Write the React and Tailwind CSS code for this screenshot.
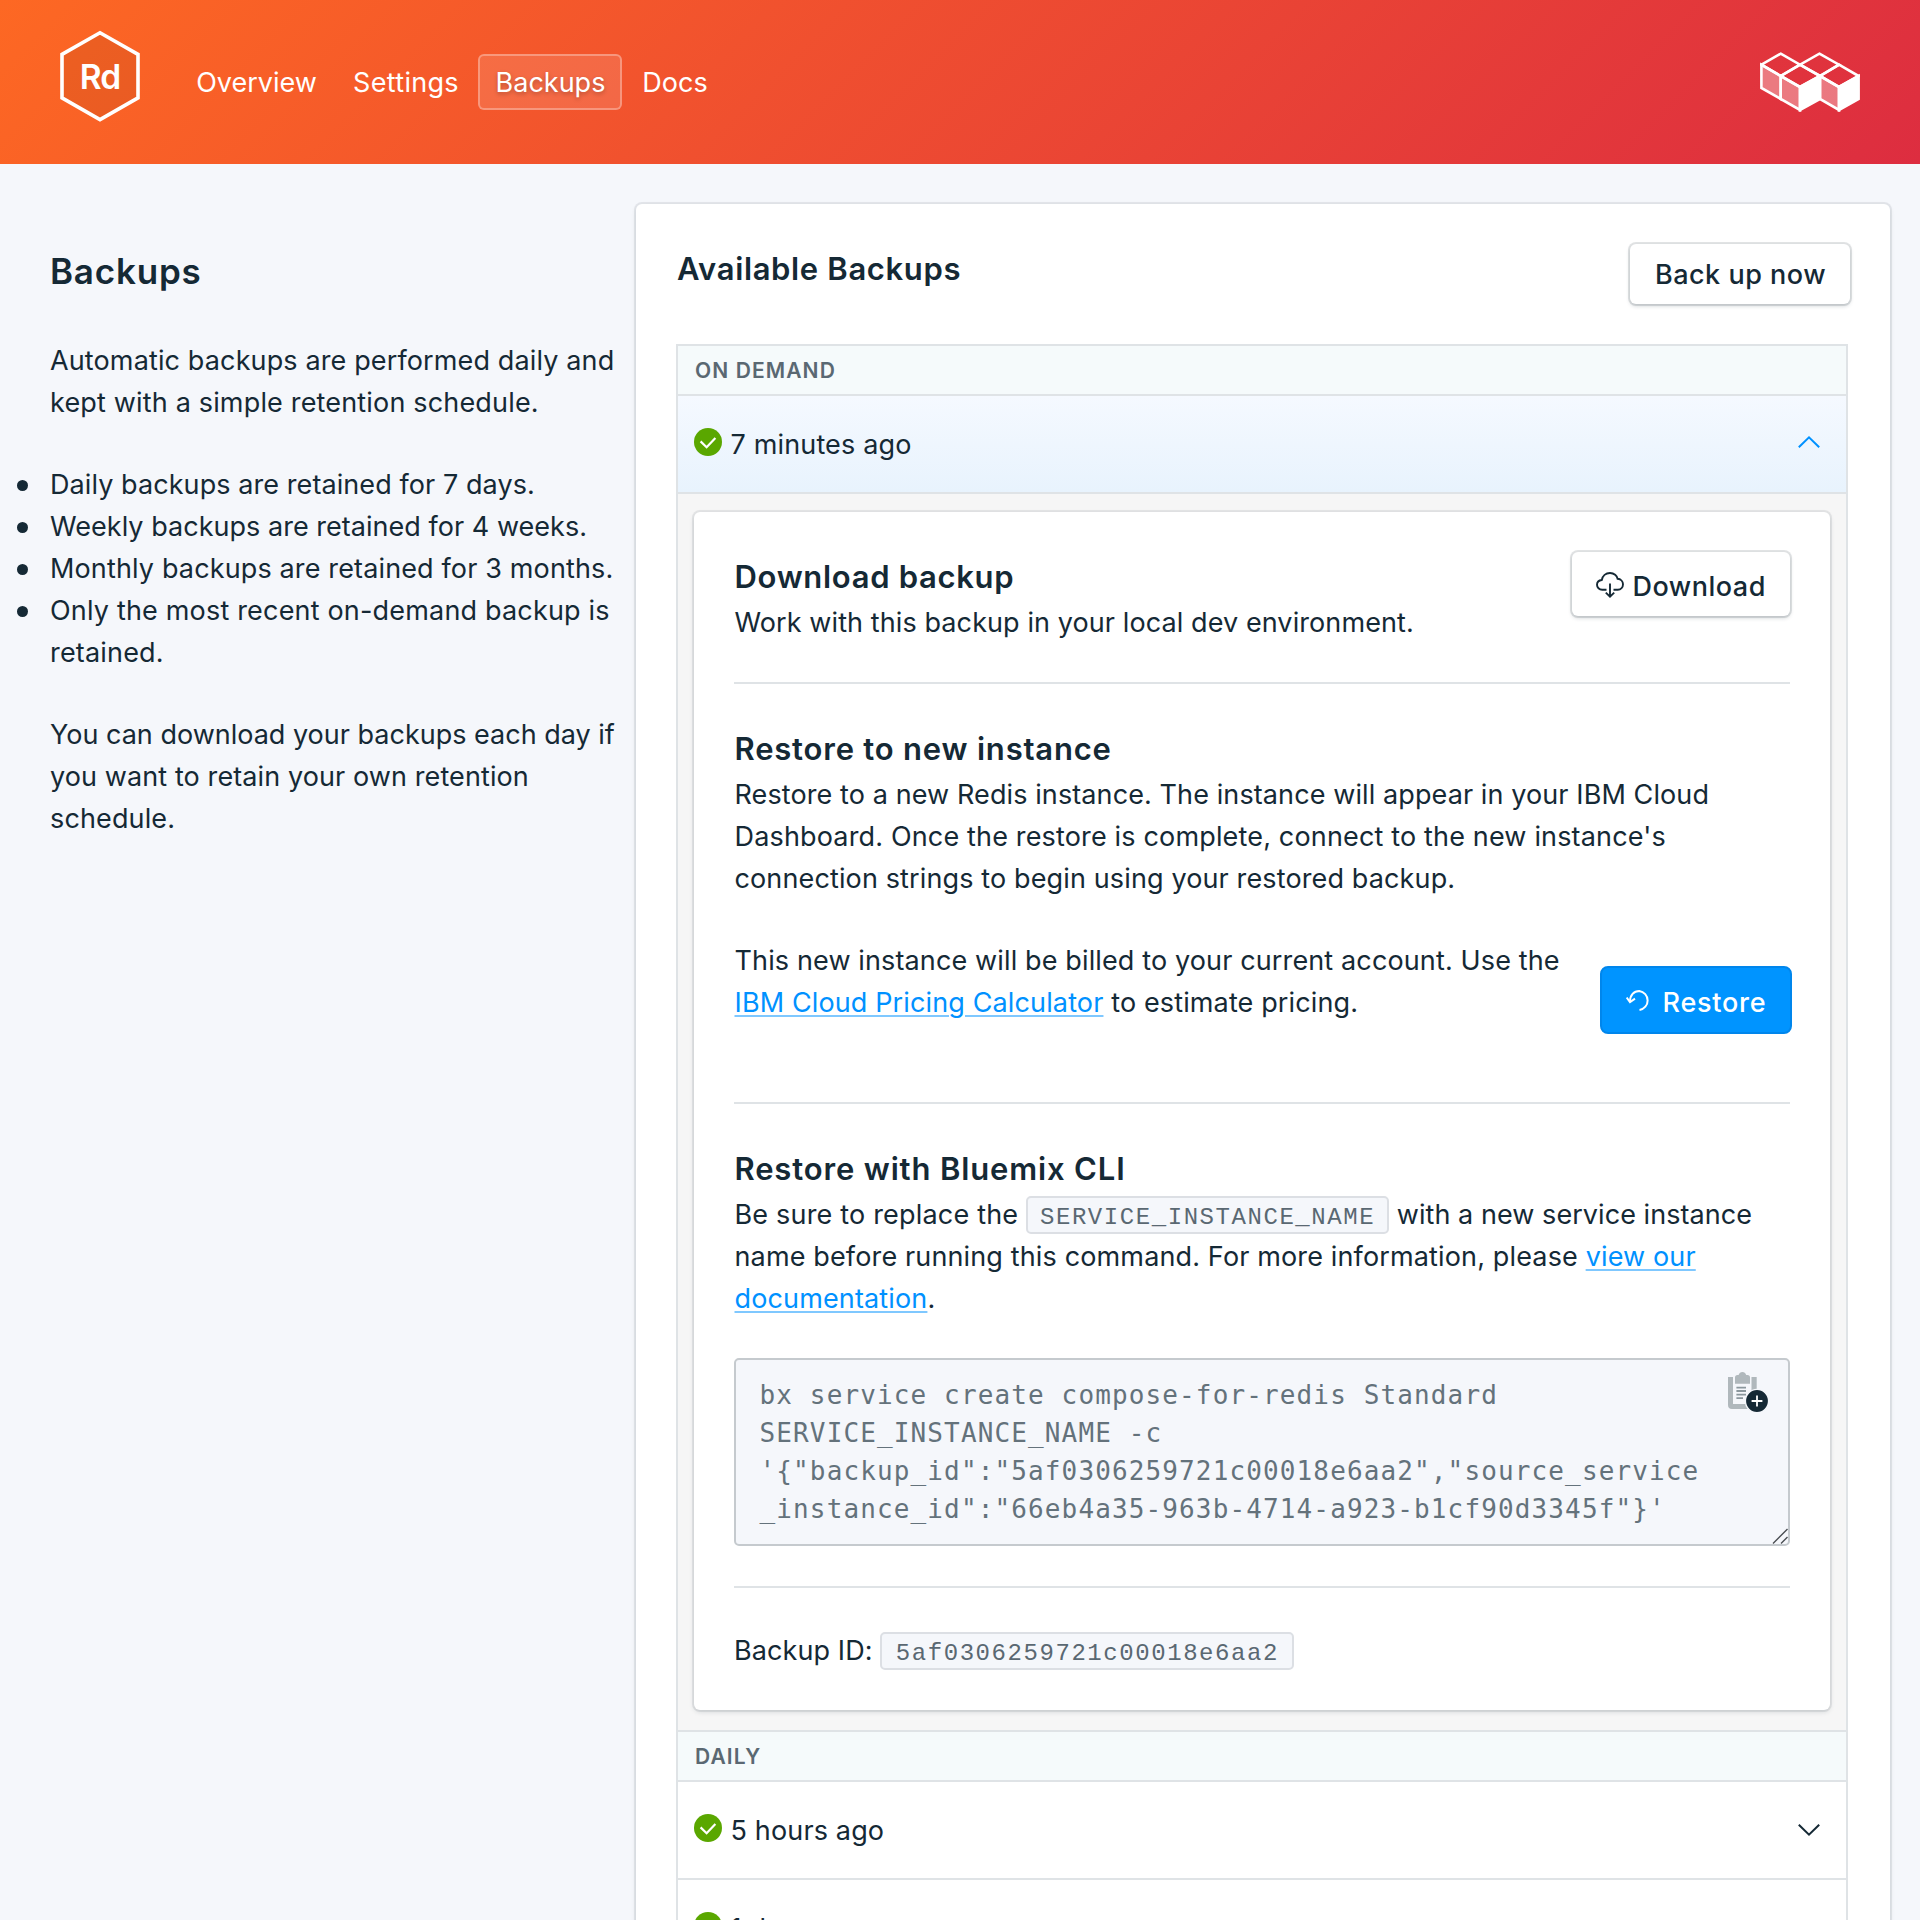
import React from "react";

function HexLogo() {
  return (
    <div className="grid h-[92px] w-[80px] shrink-0 place-items-center">
      <svg viewBox="0 0 80 92" className="col-start-1 row-start-1 h-[92px] w-[80px]">
        <polygon
          points="40,2.8 78,24.4 78,67.9 40,89.6 2,67.9 2,24.4"
          fill="#000"
          fillOpacity="0.06"
          stroke="#fff"
          strokeWidth="3.6"
        />
      </svg>
      <span className="col-start-1 row-start-1 pt-[2px] text-[33.5px] leading-[40px] font-semibold tracking-[-0.8px] text-white">
        Rd
      </span>
    </div>
  );
}

function CubesLogo() {
  return (
    <svg viewBox="0 0 100 60" className="h-[60px] w-[100px]" stroke="#fff" strokeWidth="2.6" strokeLinejoin="miter">
      <g fill="#fff" fillOpacity="0.35">
        <polygon points="1.4,12.7 20.7,24 20.7,47 1.4,36" />
        <polygon points="20.7,24 40,35 40,58 20.7,47" />
        <polygon points="60,24 79,35 79,58 60,47" />
      </g>
      <g fill="#fff">
        <polygon points="40,35 60,24 60,47 40,58" />
        <polygon points="79,35 98.6,24 98.6,47 79,58" />
      </g>
      <g fill="none">
        <polygon points="20.7,1.7 40,12.7 20.7,24 1.4,12.7" />
        <polygon points="59.4,1.7 79,12.7 60,24 40,12.7" />
        <polygon points="40,12.7 60,24 40,35 20.7,24" />
        <polygon points="79,12.7 98.6,24 79,35 60,24" />
      </g>
    </svg>
  );
}

function CloudDownload() {
  return (
    <svg viewBox="0 0 28 26" className="mb-[4px] h-[26px] w-[28px] shrink-0" fill="none" stroke="#152935" strokeWidth="1.9">
      <path d="M10.5 17.7H6.2C3.2 17.7 1 15.5 1 12.7C1 10.3 3 8.3 5.8 8C6.5 4 9.8 1 14 1C18.2 1 21 4 21.6 6.8C24.8 7 27 9.5 27 12.3C27 15.3 24.8 17.7 21.8 17.7H17.5" />
      <path d="M14 11.5V24.5M9.8 20.6L14 24.6L18.2 20.6" />
    </svg>
  );
}

function RestoreIcon() {
  return (
    <svg viewBox="0 0 24 21" className="mb-[5px] h-[21px] w-[24px] shrink-0" fill="none" stroke="#fff" strokeWidth="2">
      <path d="M4 12C3.8 5 8 1 13.3 1A9.6 9.6 0 0 1 13.5 20" />
      <path d="M0.7 7.5L4 12.2L9 8.6" />
    </svg>
  );
}

function CheckBadge() {
  return (
    <svg viewBox="0 0 28 28" className="mb-[4px] h-[28px] w-[28px] shrink-0">
      <circle cx="14" cy="14" r="14" fill="#5aa700" />
      <path d="M6.6 13.4L12.6 19.2L21.4 10" fill="none" stroke="#fff" strokeWidth="2.2" />
    </svg>
  );
}

function Chevron({ up }) {
  return up ? (
    <svg viewBox="0 0 22 12" className="mr-[26px] mb-[4px] h-[12px] w-[22px]" fill="none" stroke="#0091ff" strokeWidth="2">
      <path d="M0.8 11.3L11 1.4L21.2 11.3" />
    </svg>
  ) : (
    <svg viewBox="0 0 22 12" className="mr-[26px] mb-[1px] h-[12px] w-[22px]" fill="none" stroke="#152935" strokeWidth="2">
      <path d="M0.8 0.7L11 10.6L21.2 0.7" />
    </svg>
  );
}

function ClipboardAdd() {
  return (
    <svg viewBox="0 0 40 40" className="absolute top-[12px] right-[20px] h-[40px] w-[40px]">
      <path d="M0 5H5V32H20V37H4A4 4 0 0 1 0 33ZM23.5 5H28.7V19H23.5Z" fill="#b0b8bc" />
      <path d="M7 5.5Q7 3 9.5 3H10.6Q11.6 0 14.4 0Q17.2 0 18.2 3H19.5Q22 3 22 5.5V11.7H7Z" fill="#b0b8bc" />
      <path d="M8.4 15.6H18M8.4 19H18M8.4 22.6H18M8.4 26.1H15" stroke="#8b979d" strokeWidth="1.8" />
      <circle cx="29" cy="29" r="11.6" fill="#152935" stroke="#f5f7fb" strokeWidth="1.4" />
      <path d="M29 23.6V34.4M23.6 29H34.4" stroke="#fff" strokeWidth="1.8" />
    </svg>
  );
}

function Code({ children, className }) {
  return (
    <code
      className={
        "inline-flex h-[38px] items-center justify-center rounded-[5px] border-2 border-[#dcdfe4] bg-[#f5f7fb] pt-[5px] font-['Liberation_Mono',monospace] text-[24px] leading-[27px] text-[#5a6872] tracking-[1.56px] " +
        className
      }
    >
      {children}
    </code>
  );
}

function Link({ children }) {
  return (
    <a className="text-[#0091ff] underline decoration-[#0091ff]/50 decoration-2 underline-offset-[2.5px]">{children}</a>
  );
}

function GroupHeader({ children }) {
  return (
    <div className="flex h-[50px] items-center border-b-2 border-[#dfe3e6] bg-[#f5fafb] pt-[2px] pl-[17px] text-[21px] leading-[26px] font-semibold tracking-[1.1px] text-[#5a6872]">
      {children}
    </div>
  );
}

function BackupRow({ label, open }) {
  return (
    <div
      className={
        "flex h-[98px] items-center border-b-2 border-[#dfe3e6] pl-[16px] " +
        (open ? "bg-gradient-to-b from-[#f5f9ff] to-[#e8f3fd]" : "bg-white")
      }
    >
      <CheckBadge />
      <span className="mt-[2px] ml-[8.5px] flex-1 tracking-[0.15px]">{label}</span>
      <Chevron up={open} />
    </div>
  );
}

const NAV = [
  { label: "Overview", className: "w-[153px] border-transparent" },
  { label: "Settings", className: "w-[137px] border-transparent pl-px tracking-[0.3px]" },
  {
    label: "Backups",
    className: "w-[144px] border-white/30 bg-white/12 pl-px [text-shadow:0_2px_4px_rgba(0,0,0,0.25)]",
  },
  { label: "Docs", className: "-ml-px w-[100px] border-transparent" },
];

const RETENTION = [
  { text: "Daily backups are retained for 7 days.", className: "tracking-[0.08px]" },
  { text: "Weekly backups are retained for 4 weeks.", className: "tracking-[0.03px]" },
  { text: "Monthly backups are retained for 3 months.", className: "tracking-[0.14px]" },
  { text: "Only the most recent on-demand backup is retained.", className: "tracking-[0.18px]" },
];

const COMMAND = [
  "bx service create compose-for-redis Standard",
  "SERVICE_INSTANCE_NAME -c",
  "'{\"backup_id\":\"5af0306259721c00018e6aa2\",\"source_service",
  "_instance_id\":\"66eb4a35-963b-4714-a923-b1cf90d3345f\"}'",
];

export default function App() {
  return (
    <div className="flex h-[1920px] w-[1920px] flex-col overflow-hidden bg-[#f5f7fb] font-['Inter',sans-serif] text-[27px] leading-[42px] text-[#152935]">
      <header className="flex h-[164px] shrink-0 items-start bg-[linear-gradient(135deg,#fd6823,#dd2d40)] pr-[60px] pl-[60px]">
        <div className="mt-[30px]">
          <HexLogo />
        </div>
        <nav className="mt-[54px] ml-[40px] flex flex-1 gap-1 text-white">
          {NAV.map((item) => (
            <a
              key={item.label}
              className={"flex h-[56px] items-center justify-center rounded-[6px] border-2 pt-[2px] " + item.className}
            >
              {item.label}
            </a>
          ))}
        </nav>
        <div className="mt-[52px]">
          <CubesLogo />
        </div>
      </header>

      <main className="flex flex-1 pt-[40px]">
        <aside className="w-[636px] shrink-0 pt-[46px] pl-[50px] tracking-[0.13px]">
          <h1 className="text-[35px] leading-[42px] font-semibold tracking-[0.8px]">Backups</h1>
          <p className="mt-[48px] w-[576px]">
            Automatic backups are performed daily and
            <br />
            <span className="tracking-[0.17px]">kept with a simple retention schedule.</span>
          </p>
          <ul className="mt-[40px]">
            {RETENTION.map((item) => (
              <li key={item.text} className="-ml-[33px] flex">
                <span className="mt-[15.5px] mr-[22px] size-[11px] shrink-0 rounded-full bg-[#152935]" />
                <span className={"w-[574px] " + item.className}>{item.text}</span>
              </li>
            ))}
          </ul>
          <p className="mt-[40px] w-[576px]">
            <span className="tracking-[0px]">You can download your backups each day if</span>
            <br />
            <span className="tracking-[0.1px]">you want to retain your own retention</span>
            <br />
            schedule.
          </p>
        </aside>

        <section className="w-[1254px] shrink-0 rounded-t-[6px] bg-white pt-[40px] pr-[42px] pl-[40px] shadow-[0_0_0_2px_rgba(21,41,53,0.08),0_2px_5px_rgba(21,41,53,0.12)]">
          <div className="flex h-[100px] items-start justify-between">
            <h2 className="mt-[5px] ml-[1px] text-[31px] leading-[40px] font-semibold tracking-[0.65px]">
              Available Backups
            </h2>
            <button className="-mr-[2px] h-[60px] w-[220px] rounded-[6px] bg-white pt-px pl-[1px] font-medium tracking-[0.5px] shadow-[0_0_0_2px_rgba(21,41,53,0.12),0_2px_4px_rgba(21,41,53,0.2)]">
              Back up now
            </button>
          </div>

          <div className="border-2 border-[#dfe3e6]">
            <GroupHeader>ON DEMAND</GroupHeader>
            <BackupRow label="7 minutes ago" open />
            <div className="border-b-2 border-[#dfe3e6] bg-[#f6f6f6] px-[16px] pt-[18px] pb-[20px]">
              <div className="h-[1198px] rounded-[6px] bg-white px-[40px] tracking-[0.1px] shadow-[0_0_0_2px_rgba(21,41,53,0.08),0_2px_5px_rgba(21,41,53,0.15)]">
                <div className="flex h-[172px] justify-between border-b-2 border-[#dfe3e6]">
                  <div className="pt-[45px] pl-[0.5px]">
                    <h3 className="text-[31px] leading-[40px] font-semibold tracking-[0.68px]">Download backup</h3>
                    <p className="mt-[5px] tracking-[0.09px]">Work with this backup in your local dev environment.</p>
                  </div>
                  <button className="mt-[40px] flex h-[64px] w-[218px] items-center rounded-[6px] bg-white pt-[6px] pl-[24px] font-medium tracking-[0.5px] shadow-[0_0_0_2px_rgba(21,41,53,0.12),0_2px_4px_rgba(21,41,53,0.2)]">
                    <CloudDownload />
                    <span className="ml-[8.5px]">Download</span>
                  </button>
                </div>

                <div className="h-[420px] border-b-2 border-[#dfe3e6] pt-[45px] pl-[0.5px]">
                  <h3 className="text-[31px] leading-[40px] font-semibold tracking-[0.8px]">Restore to new instance</h3>
                  <p className="mt-[5px]">
                    Restore to a new Redis instance. The instance will appear in your IBM Cloud
                    <br />
                    <span className="tracking-[0.16px]">
                      Dashboard. Once the restore is complete, connect to the new instance's
                    </span>
                    <br />
                    <span className="tracking-[0.13px]">connection strings to begin using your restored backup.</span>
                  </p>
                  <div className="mt-[40px] flex justify-between tracking-[0.13px]">
                    <p>
                      This new instance will be billed to your current account. Use the
                      <br />
                      <Link>IBM Cloud Pricing Calculator</Link> to estimate pricing.
                    </p>
                    <button className="mt-[26px] -mr-[2px] flex h-[68px] w-[192px] items-center rounded-[8px] border-2 border-[#0086ec] bg-[#0094ff] pt-[5px] pl-[24px] font-medium tracking-[0.75px] text-white">
                      <RestoreIcon />
                      <span className="ml-[12.5px]">Restore</span>
                    </button>
                  </div>
                </div>

                <div className="h-[484px] border-b-2 border-[#dfe3e6] pt-[45px]">
                  <h3 className="pl-[0.5px] text-[31px] leading-[40px] font-semibold tracking-[0.85px]">
                    Restore with Bluemix CLI
                  </h3>
                  <p className="mt-[5px] pl-[0.5px] tracking-[0.14px]">
                    <span className="tracking-[0.19px]">Be sure to replace the </span>
                    <Code className="w-[363px]">SERVICE_INSTANCE_NAME</Code>
                    <span className="tracking-[0.06px]"> with a new service instance</span>
                    <br />
                    name before running this command. For more information, please <Link>view our</Link>
                    <br />
                    <Link>documentation</Link>.
                  </p>
                  <div className="relative mt-[38px] h-[188px] rounded-[5px] border-2 border-[#c5cace] bg-[#f5f7fb] pt-[16px] pl-[23.5px]">
                    <pre className="font-['DejaVu_Sans_Mono',monospace] text-[26px] leading-[38px] tracking-[1.13px] text-[#64727b]">
                      {COMMAND.join("\n")}
                    </pre>
                    <ClipboardAdd />
                    <svg
                      viewBox="0 0 16 16"
                      className="absolute right-0 bottom-0 h-[16px] w-[16px]"
                      stroke="#4a4f53"
                      strokeWidth="1.4"
                    >
                      <path d="M1 15.5L15.5 1M9 15.5L15.5 9" />
                    </svg>
                  </div>
                </div>

                <p className="pt-[42px]">
                  Backup ID: <Code className="w-[414px]">5af0306259721c00018e6aa2</Code>
                </p>
              </div>
            </div>
            <GroupHeader>DAILY</GroupHeader>
            <BackupRow label="5 hours ago" />
            <BackupRow label="1 day ago" />
          </div>
        </section>
      </main>
    </div>
  );
}
